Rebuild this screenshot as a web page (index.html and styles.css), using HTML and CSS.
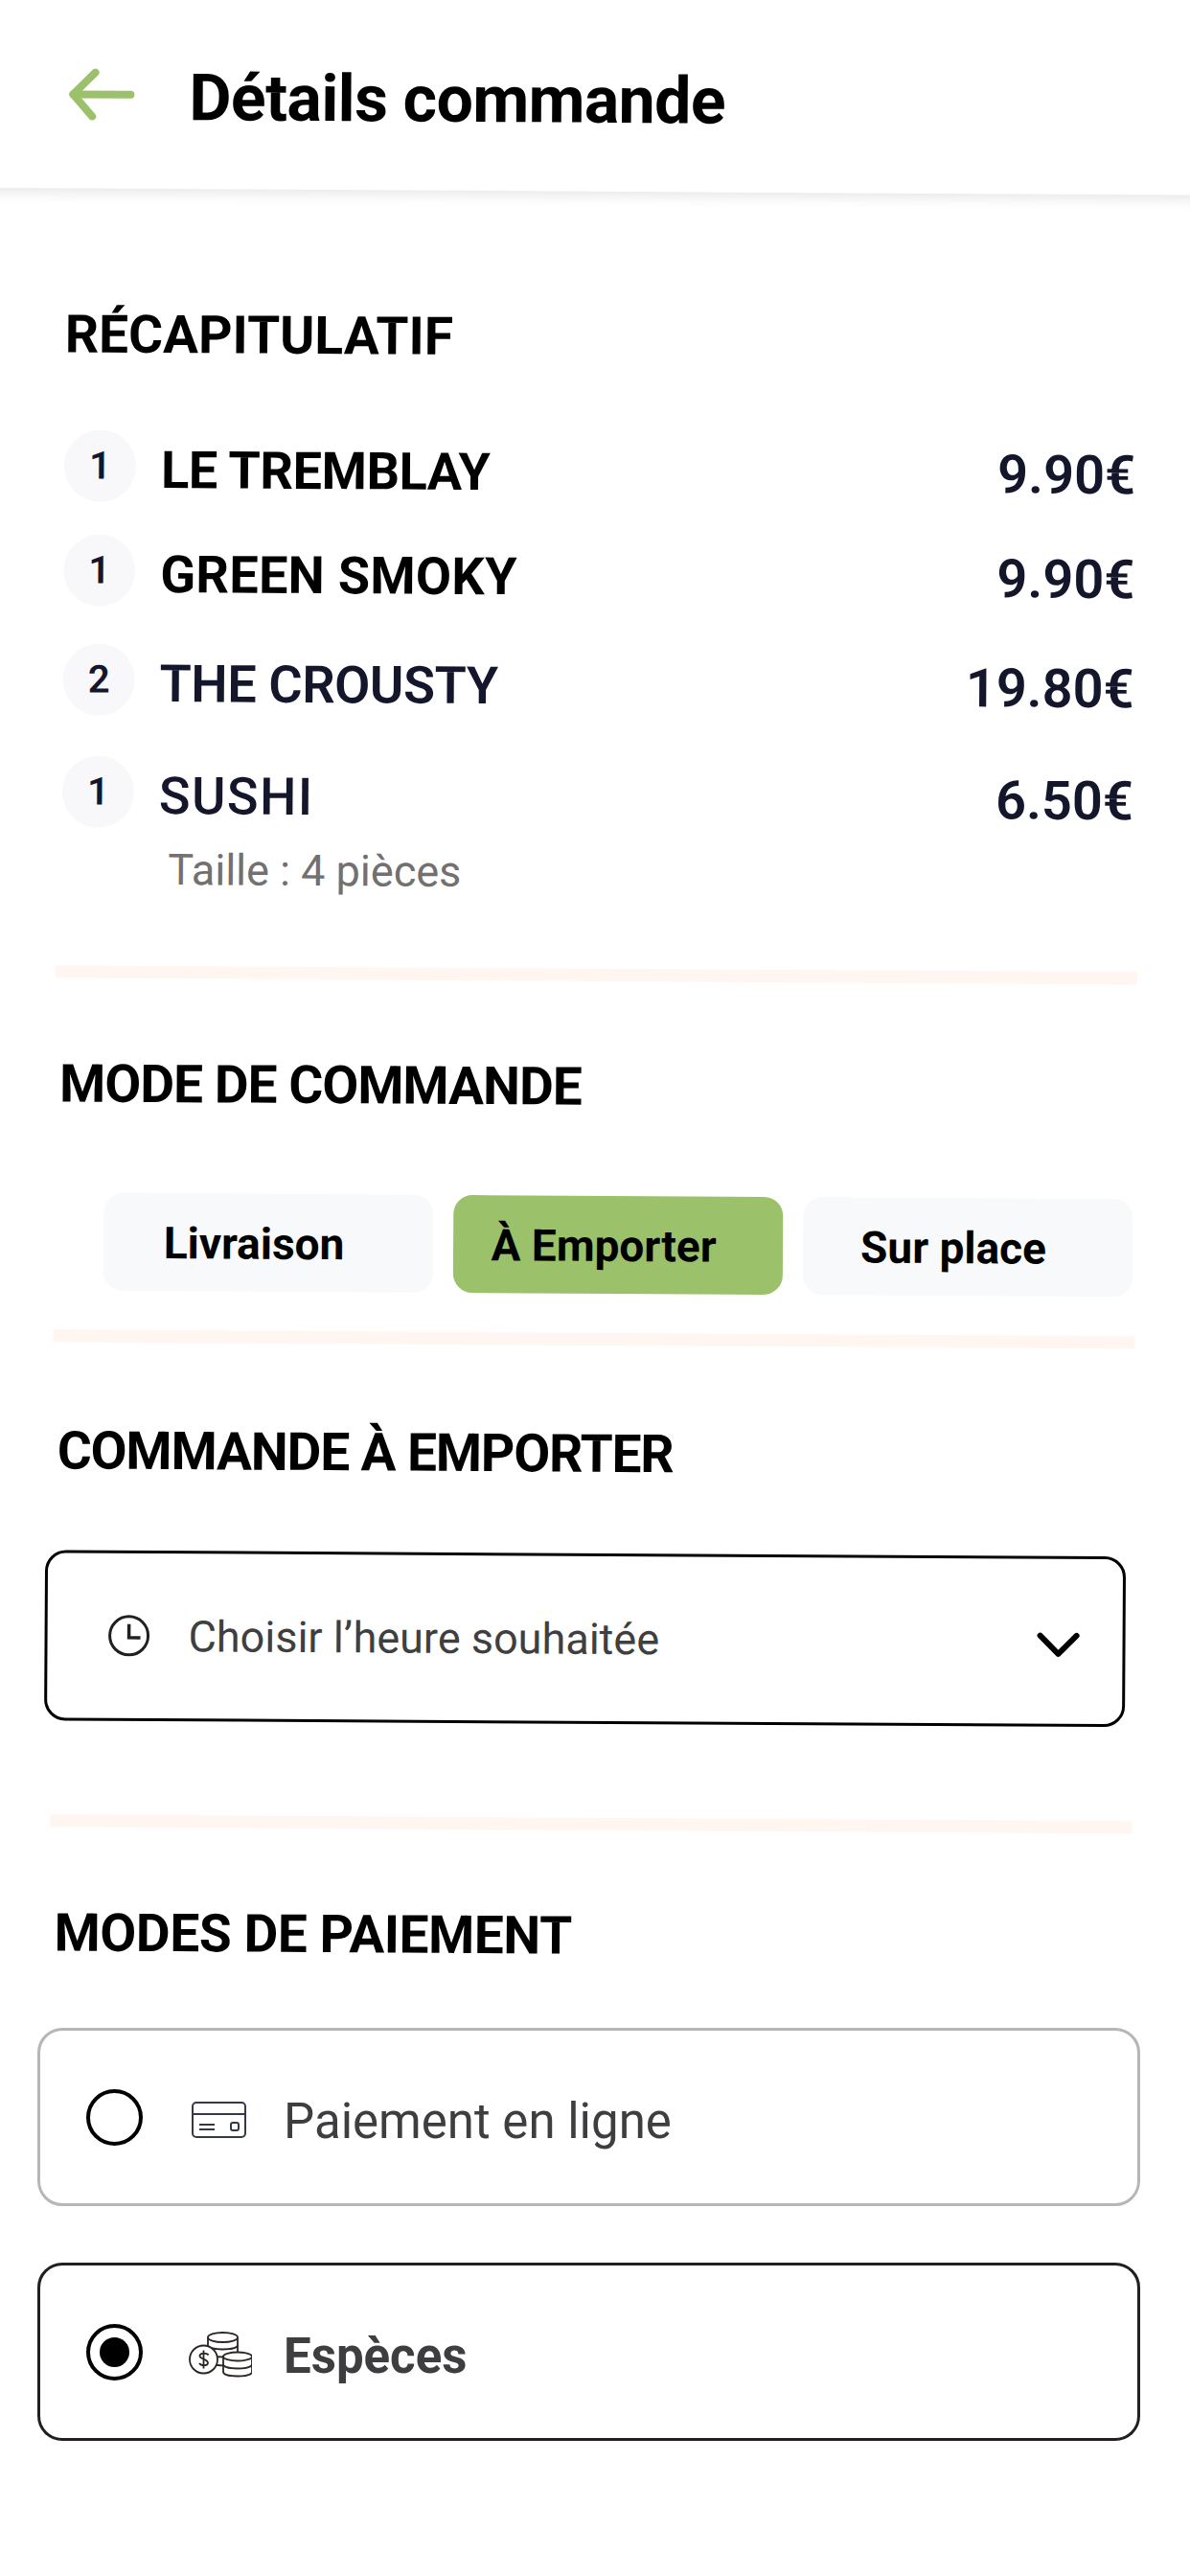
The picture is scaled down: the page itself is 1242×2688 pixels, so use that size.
FILE: index.html
```html
<!DOCTYPE html>
<html lang="fr">
<head>
    <meta charset="UTF-8">
    <title>Détails commande</title>
    <link rel="stylesheet" href="styles.css">
</head>
<body>
    <div class="tilted">
        <header class="topbar">
            <svg class="back" width="70" height="54" viewBox="0 0 70 54" fill="none" stroke="#9bc26b" stroke-width="8" stroke-linecap="round" stroke-linejoin="round">
                <path d="M65 27H5"/>
                <path d="M28 4 5 27l20 23"/>
            </svg>
            <h1>Détails commande</h1>
        </header>

        <section class="summary">
            <h2 class="wide">RÉCAPITULATIF</h2>
            <div class="item item-1">
                <span class="qty">1</span>
                <span class="name">LE TREMBLAY</span>
                <span class="price">9.90€</span>
            </div>
            <div class="item item-2">
                <span class="qty">1</span>
                <span class="name spaced">GREEN SMOKY</span>
                <span class="price">9.90€</span>
            </div>
            <div class="item item-3">
                <span class="qty">2</span>
                <span class="name navy">THE CROUSTY</span>
                <span class="price">19.80€</span>
            </div>
            <div class="item item-4">
                <span class="qty">1</span>
                <span class="name navy light">SUSHI</span>
                <span class="price">6.50€</span>
            </div>
            <p class="size">Taille : 4 pièces</p>
        </section>

        <hr class="sep sep-1">

        <section class="mode">
            <h2 class="tight">MODE DE COMMANDE</h2>
            <div class="tabs">
                <div class="tab">Livraison</div>
                <div class="tab active">À Emporter</div>
                <div class="tab">Sur place</div>
            </div>
        </section>

        <hr class="sep sep-2">

        <section class="pickup">
            <h2 class="tighter">COMMANDE À EMPORTER</h2>
            <div class="dropdown">
                <svg class="clock" width="44" height="44" viewBox="0 0 44 44" fill="none" stroke="#231f20" stroke-width="3">
                    <circle cx="22" cy="22" r="20"/>
                    <path d="M22 10v14h12" stroke-width="3.5"/>
                </svg>
                <span class="dropdown-label">Choisir l’heure souhaitée</span>
                <svg class="chevron" width="46" height="28" viewBox="0 0 46 28" fill="none" stroke="#000" stroke-width="6" stroke-linecap="round" stroke-linejoin="round">
                    <path d="M4 4l19 19L42 4"/>
                </svg>
            </div>
        </section>

        <hr class="sep sep-3">

        <section class="pay-title">
            <h2>MODES DE PAIEMENT</h2>
        </section>
    </div>

    <div class="payments">
        <div class="pay-card">
            <span class="radio"></span>
            <svg class="pay-icon" width="66" height="48" viewBox="0 0 66 48" fill="none" stroke="#333a45" stroke-width="2">
                <rect x="4" y="6" width="55" height="36" rx="4"/>
                <path d="M4 18h55"/>
                <path d="M11 29h16M11 34h16"/>
                <rect x="44" y="27" width="8" height="8" rx="2"/>
            </svg>
            <span class="pay-label">Paiement en ligne</span>
        </div>
        <div class="pay-card selected">
            <span class="radio"><span class="dot"></span></span>
            <svg class="pay-icon" width="66" height="48" viewBox="0 0 66 48" fill="#fff" stroke="#2b2624" stroke-width="1.8">
                <path d="M20 6v28h31V6z" stroke="none"/>
                <path d="M20 6v30M51 6v18"/>
                <path d="M20 14c0 6 31 6 31 0M20 22c0 6 31 6 31 0M20 30c0 5 16 6 20 5"/>
                <ellipse cx="35.500" cy="6" rx="15.500" ry="5"/>
                <path d="M36 26v16c0 6 30 6 30 0V26z"/>
                <path d="M36 34c0 6 30 6 30 0" fill="none"/>
                <ellipse cx="51" cy="26" rx="15" ry="4.500"/>
                <circle cx="15.500" cy="29" r="14.500"/>
                <path d="M20.500 24.500c-1-2-8-3-9 .5s8.500 3.500 8.500 7.500-7.500 3-9 .5M15.500 19.500v19" fill="none"/>
            </svg>
            <span class="pay-label">Espèces</span>
        </div>
    </div>
</body>
</html>
```

FILE: styles.css
```css
* {
    box-sizing: border-box;
    margin: 0;
    padding: 0;
}

body {
    background: #fff;
    font-family: Roboto, "Noto Sans", sans-serif;
    color: #000;
    overflow: hidden;
}

/* the whole upper part of the shot sits slightly crooked */
.tilted {
    transform: rotate(0.35deg);
    transform-origin: 0 0;
}

.topbar {
    height: 196px;
    margin: 0 -30px;
    display: flex;
    align-items: center;
    padding-left: 102px;
    gap: 56px;
    background: #fff;
    box-shadow: 0 12px 14px -8px rgba(0, 0, 0, 0.1);
}

.topbar h1 {
    padding-top: 6px;
    font-size: 68px;
    font-weight: 700;
    letter-spacing: -0.6px;
}

h2 {
    font-size: 55px;
    line-height: 60px;
    font-weight: 700;
    letter-spacing: -0.4px;
}

h2.wide { letter-spacing: 0.05px; }
h2.tight { letter-spacing: -0.95px; }
h2.tighter { letter-spacing: -1.1px; }

.summary {
    padding: 122px 54px 0 70px;
}

.item {
    height: 75px;
    display: flex;
    align-items: center;
}

.item-1 { margin-top: 70px; }
.item-2 { margin-top: 34px; }
.item-3 { margin-top: 39px; }
.item-4 { margin-top: 42px; }

.qty {
    width: 75px;
    height: 75px;
    flex: none;
    border-radius: 50%;
    background: #f8f8fb;
    color: #14172b;
    font-size: 40px;
    font-weight: 600;
    display: flex;
    align-items: center;
    justify-content: center;
}

.name {
    margin-left: 26px;
    padding-top: 8px;
    font-size: 54px;
    font-weight: 700;
    letter-spacing: -0.4px;
}

.name.spaced {
    letter-spacing: 0.3px;
}

.navy {
    color: #14172b;
    font-weight: 600;
}

.light {
    font-weight: 500;
    letter-spacing: 1.5px;
}

.price {
    margin-left: auto;
    padding-top: 6px;
    font-size: 56px;
    font-weight: 600;
    color: #14172b;
}

.size {
    margin: 17px 0 0 111px;
    font-size: 45px;
    line-height: 54px;
    color: #727070;
}

.sep {
    border: none;
    height: 13px;
    width: 1129px;
    margin-left: 64px;
    background: #fff5f1;
}

.sep-1 { margin-top: 73px; }
.sep-2 { margin-top: 41px; }
.sep-3 { margin-top: 98px; }

.mode {
    padding: 80px 0 0 69px;
}

.tabs {
    display: flex;
    gap: 21px;
    margin: 84px 0 0 47px;
}

.tab {
    width: 344px;
    height: 102px;
    padding: 2px 30px 0 0;
    border-radius: 20px;
    background: #f8f9fb;
    display: flex;
    align-items: center;
    justify-content: center;
    font-size: 46px;
    font-weight: 700;
}

.tab.active {
    background: #9bc26b;
}

.pickup {
    padding: 83px 0 0 69px;
}

.dropdown {
    width: 1128px;
    height: 178px;
    margin: 74px 0 0 -12px;
    padding: 0 44px 0 63px;
    border: 3px solid #000;
    border-radius: 22px;
    display: flex;
    align-items: center;
}

.clock {
    flex: none;
}

.dropdown-label {
    margin-left: 40px;
    font-size: 45px;
    color: #3f3f3f;
}

.chevron {
    margin-left: auto;
    margin-top: 8px;
}

.pay-title {
    padding: 80px 0 0 69px;
}

.payments {
    display: flex;
    flex-direction: column;
    gap: 59px;
    margin: 70px 0 0 39px;
    width: 1151px;
}

.pay-card {
    height: 186px;
    padding-left: 48px;
    border: 3.500px solid #b5b6b8;
    border-radius: 26px;
    display: flex;
    align-items: center;
}

.pay-card.selected {
    border-color: #231f1e;
}

.radio {
    width: 59px;
    height: 59px;
    flex: none;
    border: 4px solid #000;
    border-radius: 50%;
    display: flex;
    align-items: center;
    justify-content: center;
}

.dot {
    width: 31px;
    height: 31px;
    border-radius: 50%;
    background: #000;
}

.pay-icon {
    flex: none;
    margin: 6px 0 0 48px;
}

.pay-label {
    margin-left: 33px;
    padding-top: 8px;
    font-size: 51px;
    color: #3e3e40;
}

.selected .pay-label {
    font-weight: 700;
}
```
